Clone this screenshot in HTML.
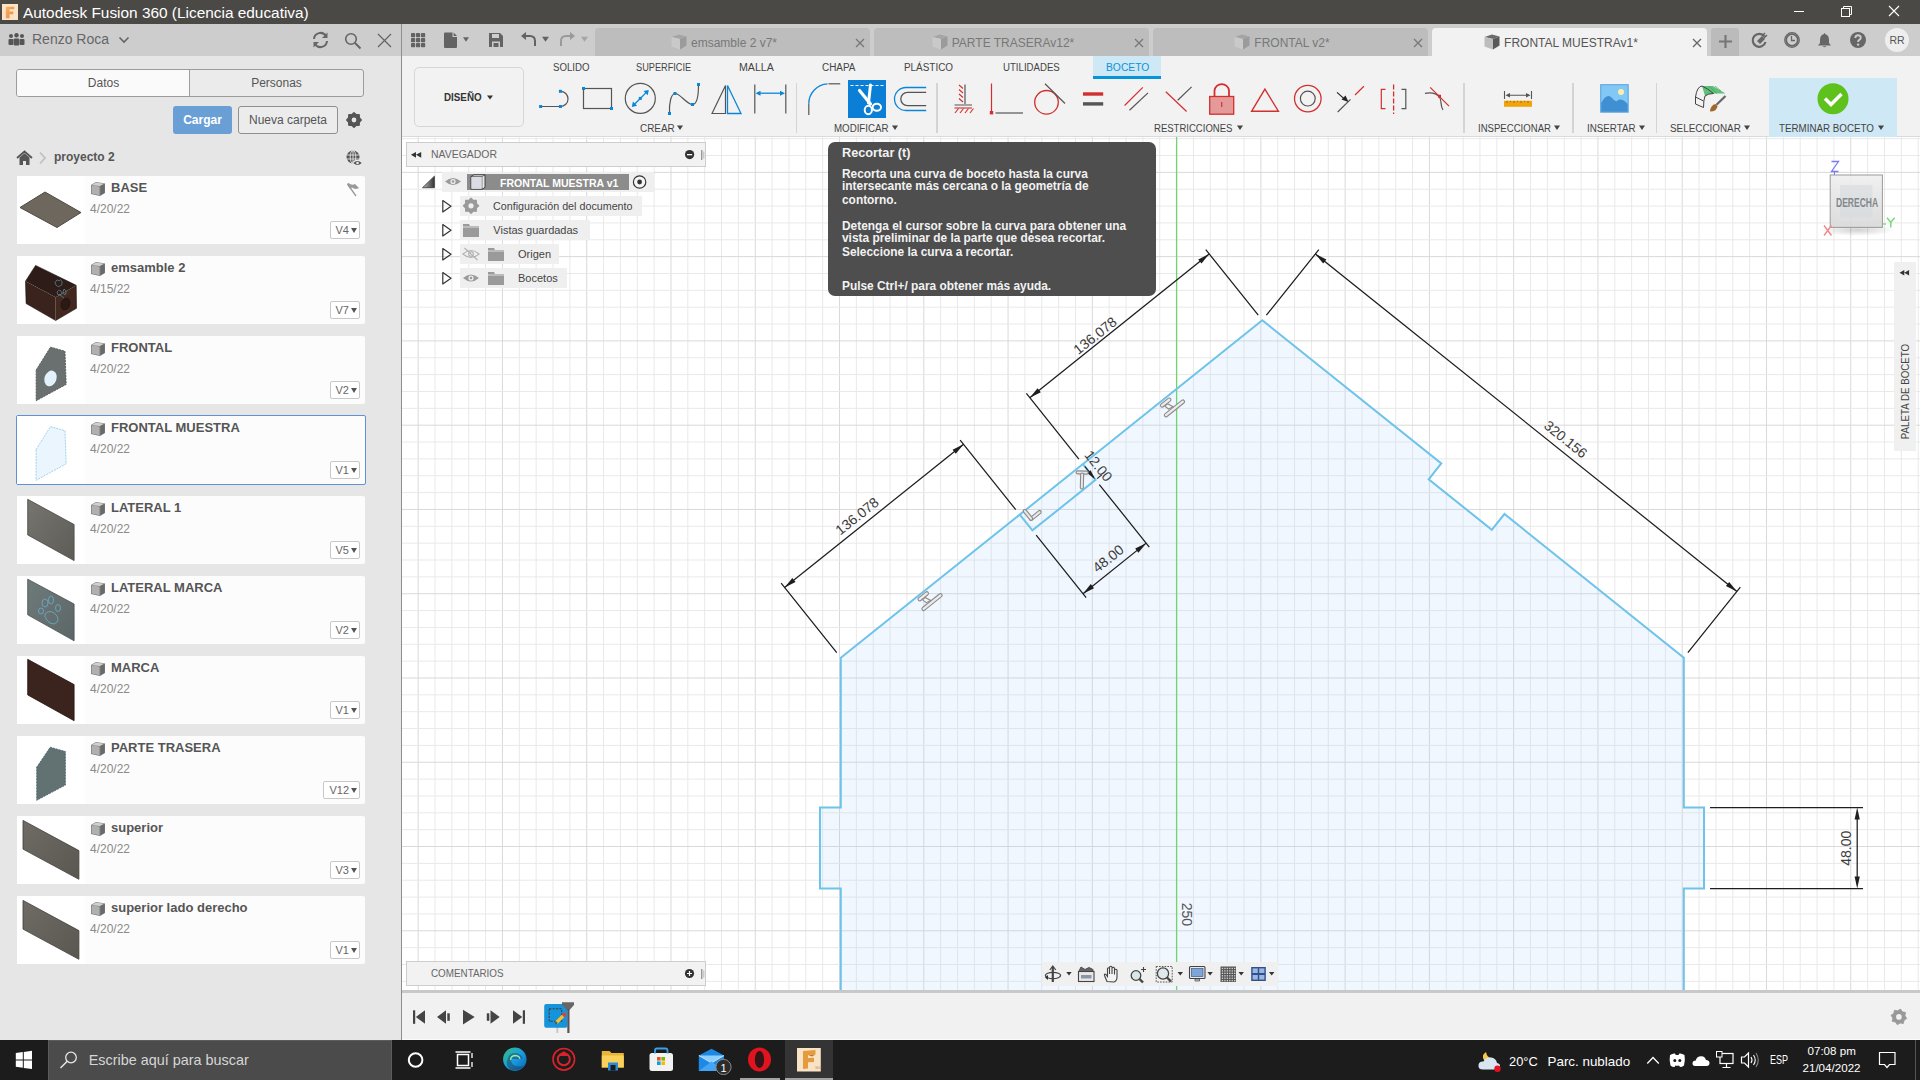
<!DOCTYPE html>
<html><head><meta charset="utf-8">
<style>
*{margin:0;padding:0;box-sizing:border-box}
html,body{width:1920px;height:1080px;overflow:hidden;background:#fff;font-family:"Liberation Sans",sans-serif}
.a{position:absolute}
svg{position:absolute;overflow:visible}
#title{left:0;top:0;width:1920px;height:24px;background:#4b4946}
#lhead{left:0;top:24px;width:401px;height:32px;background:#cdcdcd}
#lbody{left:0;top:56px;width:401px;height:984px;background:#e6e6e6}
#ldiv{left:401px;top:24px;width:1px;height:1016px;background:#8e8e8e}
#rhead{left:402px;top:24px;width:1518px;height:32px;background:#cdcdcd}
#tool{left:402px;top:56px;width:1518px;height:81px;background:#f2f2f2;border-bottom:1px solid #dadada}
#canvas{left:402px;top:137px;width:1518px;height:853px;background:#fff;overflow:hidden}
#tl{left:402px;top:990px;width:1518px;height:50px;background:#f1f1f1;border-top:3px solid #c8c8c8}
#task{left:0;top:1040px;width:1920px;height:40px;background:#1c1c1c}
.gm{stroke:#e9e9e9;stroke-width:1}
.gM{stroke:#d9d9d9;stroke-width:1}
.card{position:absolute;left:17px;width:348px;height:68px;background:#fcfcfc;border-radius:2px}
.card .th{position:absolute;left:0;top:0;width:68px;height:68px;background:#fff}
.card .t{position:absolute;left:94px;top:4px;font-weight:bold;font-size:13px;color:#555;white-space:nowrap}
.card .d{position:absolute;left:73px;top:26px;font-size:12px;color:#8a8a8a}
.card .v{position:absolute;right:5px;top:45px;min-width:29px;height:18px;border:1px solid #c8c8c8;background:#fff;border-radius:2px;font-size:11px;color:#666;padding:0 10px 0 5px;line-height:16px}
.card .v:after{content:"";position:absolute;right:2px;top:6px;border-left:3.5px solid transparent;border-right:3.5px solid transparent;border-top:5px solid #555}
.tab{position:absolute;top:28px;width:275px;height:28px;background:#bdbdbd;border-radius:4px 4px 0 0;font-size:14px;color:#777;white-space:nowrap}
.lbl{position:absolute;font-size:11px;color:#444;white-space:nowrap}
</style></head><body>
<div id="title" class="a"><svg style="left:2px;top:4px" width="16" height="16" viewBox="0 0 17 18" preserveAspectRatio="none">
<defs><linearGradient id="fg" x1="0" y1="0" x2="1" y2="1"><stop offset="0" stop-color="#f7b26a"/><stop offset="1" stop-color="#e88a3c"/></linearGradient></defs>
<rect x="0" y="0" width="17" height="18" fill="#fbe3c8"/>
<path d="M4 3 L13 3 L13 6 L8 6 L8 8.5 L12 8.5 L12 11.5 L8 11.5 L8 16 L4 16 Z" fill="url(#fg)"/>
</svg>
<div class="a" style="left:23px;top:3.5px;font-size:15.4px;color:#fff;white-space:nowrap">Autodesk Fusion 360 (Licencia educativa)</div>
<svg style="left:1790px;top:6px" width="120" height="14">
<line x1="4" y1="5.5" x2="14" y2="5.5" stroke="#fff" stroke-width="1"/>
<rect x="51.5" y="2.5" width="8" height="8" fill="none" stroke="#fff"/>
<path d="M53.5 2.5 V0.5 H61.5 V8.5 H59.5" fill="none" stroke="#fff"/>
<path d="M99 0 L109 10 M109 0 L99 10" stroke="#fff" stroke-width="1.1"/>
</svg>
</div>
<div id="lhead" class="a"><svg style="left:8px;top:9px" width="17" height="13" viewBox="0 0 17 13">
<circle cx="3" cy="3" r="2" fill="#555"/><circle cx="8.5" cy="2.2" r="2.2" fill="#555"/><circle cx="14" cy="3" r="2" fill="#555"/>
<rect x="0.5" y="6" width="5" height="6" rx="1" fill="#555"/><rect x="5.8" y="5.5" width="5.4" height="7" rx="1" fill="#555"/><rect x="11.5" y="6" width="5" height="6" rx="1" fill="#555"/>
</svg>
<div class="a" style="left:32px;top:7px;font-size:14px;color:#666;white-space:nowrap">Renzo Roca</div>
<svg style="left:118px;top:12px" width="12" height="8"><path d="M1.5 1.5 L6 6 L10.5 1.5" fill="none" stroke="#666" stroke-width="1.6"/></svg>
<svg style="left:311px;top:7px" width="19" height="18" viewBox="0 0 19 18">
<path d="M3 8 A6.5 6.5 0 0 1 15 5" fill="none" stroke="#666" stroke-width="2"/>
<path d="M16 10 A6.5 6.5 0 0 1 4 13" fill="none" stroke="#666" stroke-width="2"/>
<path d="M16.5 1.5 L16.5 7 L11 7 Z" fill="#666"/><path d="M2.5 16.5 L2.5 11 L8 11 Z" fill="#666"/>
</svg>
<svg style="left:344px;top:8px" width="18" height="18"><circle cx="7" cy="7" r="5.3" fill="none" stroke="#666" stroke-width="1.6"/><path d="M11 11 L16.5 16.5" stroke="#666" stroke-width="2"/></svg>
<svg style="left:377px;top:9px" width="16" height="16"><path d="M1 1 L14 14 M14 1 L1 14" stroke="#666" stroke-width="1.3"/></svg>
</div>
<div id="lbody" class="a"><div class="a" style="left:16px;top:13px;width:348px;height:28px;border:1px solid #9c9c9c;border-radius:3px;background:#ebebeb;overflow:hidden"><div class="a" style="left:0;top:0;width:173px;height:26px;background:#fafafa;border-right:1px solid #9c9c9c"></div><div class="a" style="left:0;top:6px;width:173px;text-align:center;font-size:12px;color:#555">Datos</div><div class="a" style="left:173px;top:6px;width:173px;text-align:center;font-size:12px;color:#555">Personas</div></div>
<div class="a" style="left:173px;top:50px;width:59px;height:28px;background:#6a9fd5;border-radius:3px;color:#fff;font-weight:bold;font-size:12px;text-align:center;line-height:28px">Cargar</div>
<div class="a" style="left:238px;top:50px;width:100px;height:28px;background:#ececec;border:1px solid #8f8f8f;border-radius:3px;color:#555;font-size:12px;text-align:center;line-height:26px">Nueva carpeta</div>
<svg style="left:345px;top:55px" width="18" height="18"><polygon points="16.20,9.00 14.19,11.15 14.09,14.09 11.15,14.19 9.00,16.20 6.85,14.19 3.91,14.09 3.81,11.15 1.80,9.00 3.81,6.85 3.91,3.91 6.85,3.81 9.00,1.80 11.15,3.81 14.09,3.91 14.19,6.85" fill="#555" stroke="#555" stroke-width="1.6" stroke-linejoin="round"/><circle cx="9" cy="9" r="2.38" fill="#e6e6e6"/></svg>
<svg style="left:16px;top:94px" width="34" height="18"><path d="M1 8 L8.5 1.5 L16 8" fill="none" stroke="#555" stroke-width="1.8"/><path d="M3.5 7.5 L8.5 3.2 L13.5 7.5 V15 H10 V11 H7 V15 H3.5 Z" fill="#555"/><path d="M24 2.5 L29 8 L24 13.5" fill="none" stroke="#c0c0c0" stroke-width="1.8"/></svg>
<div class="a" style="left:54px;top:94px;font-weight:bold;font-size:12px;color:#555">proyecto 2</div>
<svg style="left:345px;top:93px" width="19" height="19"><circle cx="8" cy="8" r="6.5" fill="#555"/><g stroke="#e6e6e6" stroke-width="0.9" fill="none"><ellipse cx="8" cy="8" rx="2.8" ry="6.5"/><line x1="1.5" y1="6" x2="14.5" y2="6"/><line x1="1.5" y1="10" x2="14.5" y2="10"/><line x1="8" y1="1.5" x2="8" y2="14.5"/></g><ellipse cx="12.5" cy="14" rx="5" ry="3.2" fill="#e6e6e6"/><path d="M8.3 14 Q12.5 10 16.7 14 Q12.5 18 8.3 14Z" fill="#555"/><circle cx="12.5" cy="14" r="1.3" fill="#e6e6e6"/></svg>
<div class="card" style="top:120px"><div class="th"><svg width="68" height="68" style="left:0;top:0"><path d="M3 31.5 L28 16 L64 36.5 L40 51.5 Z" fill="#6d675d" stroke="#4e4a43" stroke-width="1"/></svg></div><svg style="left:73px;top:5px" width="16" height="16" viewBox="0 0 16 16"><path d="M1 4 L6 1 L15 2.5 L15 12 L10 15 L1 13 Z" fill="#777"/><path d="M1.6 4.2 L6 1.6 L14 2.8 L10 5 Z" fill="#cfcfcf"/><path d="M10.6 5.2 L14.4 3.2 L14.4 11.7 L10.6 14 Z" fill="#6a6a6a"/><path d="M1.6 4.6 L9.6 5.5 L9.6 14.2 L1.6 12.6 Z" fill="#b0b0b0"/></svg><div class="t">BASE</div><div class="d">4/20/22</div><div class="v">V4</div><svg style="left:328px;top:6px" width="16" height="16"><path d="M2 2 L3.5 1 Q7 4 10 2 L14 6 Q10 8 7 5.5 L5 7 Z" fill="#9a9a9a"/><path d="M2.5 2 L11 14" stroke="#9a9a9a" stroke-width="1.3"/></svg></div>
<div class="card" style="top:200px"><div class="th"><svg width="68" height="68" style="left:0;top:0"><path d="M8.5 25.2 L18.6 9.4 L59.2 29.3 L38.7 41.2 Z" fill="#2d1c17"/><path d="M8.5 25.2 L38.7 41.2 L38.7 64.5 L9.1 47.5 Z" fill="#3a231d"/><path d="M38.7 41.2 L59.2 29.3 L59.5 52.3 L38.7 64.5 Z" fill="#432820"/><path d="M8.5 25.2 L18.6 9.4 L59.2 29.3 L59.5 52.3 L38.7 64.5 L9.1 47.5 Z" fill="none" stroke="#1a100d" stroke-width="0.6"/><ellipse cx="48.5" cy="48" rx="4.3" ry="6" transform="rotate(20 48.5 48)" fill="#2a1915" stroke="#1a100d" stroke-width="0.6"/><g fill="none" stroke="#5f8fa6" stroke-width="0.7"><path d="M38 27 q2 -5 4 -2 q2 -3 3 1 q1 3 -2 4 q-3 2 -5 -3z"/><path d="M40 36 q3 -4 5 1 q-1 3 -4 2z"/><path d="M47 33 q3 1 2 5 q-2 2 -3 -2z"/><path d="M42 38 L47 42"/></g></svg></div><svg style="left:73px;top:5px" width="16" height="16" viewBox="0 0 16 16"><path d="M1 4 L6 1 L15 2.5 L15 12 L10 15 L1 13 Z" fill="#777"/><path d="M1.6 4.2 L6 1.6 L14 2.8 L10 5 Z" fill="#cfcfcf"/><path d="M10.6 5.2 L14.4 3.2 L14.4 11.7 L10.6 14 Z" fill="#6a6a6a"/><path d="M1.6 4.6 L9.6 5.5 L9.6 14.2 L1.6 12.6 Z" fill="#b0b0b0"/></svg><div class="t">emsamble 2</div><div class="d">4/15/22</div><div class="v">V7</div></div>
<div class="card" style="top:280px"><div class="th"><svg width="68" height="68" style="left:0;top:0"><path d="M19.1 34 L33.5 11.1 L48 15.2 L49.2 48.4 L19.1 64.8 Z" fill="#6a7070" stroke="#4d5252" stroke-width="0.8" stroke-dasharray="2 1"/><ellipse cx="33.5" cy="42.4" rx="6" ry="8" transform="rotate(20 33.5 42.4)" fill="#e2f1fb"/></svg></div><svg style="left:73px;top:5px" width="16" height="16" viewBox="0 0 16 16"><path d="M1 4 L6 1 L15 2.5 L15 12 L10 15 L1 13 Z" fill="#777"/><path d="M1.6 4.2 L6 1.6 L14 2.8 L10 5 Z" fill="#cfcfcf"/><path d="M10.6 5.2 L14.4 3.2 L14.4 11.7 L10.6 14 Z" fill="#6a6a6a"/><path d="M1.6 4.6 L9.6 5.5 L9.6 14.2 L1.6 12.6 Z" fill="#b0b0b0"/></svg><div class="t">FRONTAL</div><div class="d">4/20/22</div><div class="v">V2</div></div>
<div class="card" style="top:359px;left:16px;width:350px;height:70px;border:1px solid #5f92d3;"><div class="a" style="left:0;top:0;width:348px;height:68px"><div class="th"><svg width="68" height="68" style="left:0;top:0"><path d="M19.1 33.4 L33.5 10.6 L48 14.7 L49.2 47.8 L19.1 64.3 Z" fill="#eaf5fd" stroke="#8cc7e6" stroke-width="0.8" stroke-dasharray="2 1"/></svg></div><svg style="left:73px;top:5px" width="16" height="16" viewBox="0 0 16 16"><path d="M1 4 L6 1 L15 2.5 L15 12 L10 15 L1 13 Z" fill="#777"/><path d="M1.6 4.2 L6 1.6 L14 2.8 L10 5 Z" fill="#cfcfcf"/><path d="M10.6 5.2 L14.4 3.2 L14.4 11.7 L10.6 14 Z" fill="#6a6a6a"/><path d="M1.6 4.6 L9.6 5.5 L9.6 14.2 L1.6 12.6 Z" fill="#b0b0b0"/></svg><div class="t">FRONTAL MUESTRA</div><div class="d">4/20/22</div><div class="v">V1</div></div></div>
<div class="card" style="top:440px"><div class="th"><svg width="68" height="68" style="left:0;top:0"><defs><linearGradient id="l1" x1="0" y1="0" x2="1" y2="1"><stop offset="0" stop-color="#77756f"/><stop offset="1" stop-color="#5e5c57"/></linearGradient></defs><path d="M10.7 3.3 L57.1 28.5 L57.1 64.6 L10.7 38.9 Z" fill="url(#l1)" stroke="#4a4844" stroke-width="0.8"/></svg></div><svg style="left:73px;top:5px" width="16" height="16" viewBox="0 0 16 16"><path d="M1 4 L6 1 L15 2.5 L15 12 L10 15 L1 13 Z" fill="#777"/><path d="M1.6 4.2 L6 1.6 L14 2.8 L10 5 Z" fill="#cfcfcf"/><path d="M10.6 5.2 L14.4 3.2 L14.4 11.7 L10.6 14 Z" fill="#6a6a6a"/><path d="M1.6 4.6 L9.6 5.5 L9.6 14.2 L1.6 12.6 Z" fill="#b0b0b0"/></svg><div class="t">LATERAL 1</div><div class="d">4/20/22</div><div class="v">V5</div></div>
<div class="card" style="top:520px"><div class="th"><svg width="68" height="68" style="left:0;top:0"><defs><linearGradient id="l2" x1="0" y1="0" x2="1" y2="1"><stop offset="0" stop-color="#6f7a7b"/><stop offset="1" stop-color="#5c6667"/></linearGradient></defs><path d="M10.7 3.2 L57.1 28 L57.1 64.8 L10.7 38.8 Z" fill="url(#l2)" stroke="#4a5152" stroke-width="0.8"/><g fill="none" stroke="#6ab7d8" stroke-width="0.7"><ellipse cx="28" cy="27" rx="3" ry="4"/><ellipse cx="34" cy="24" rx="2.5" ry="4"/><ellipse cx="41" cy="32" rx="2.5" ry="3.5"/><ellipse cx="24" cy="35" rx="2.5" ry="3"/><path d="M28 38 q6 -6 12 2 q3 6 -3 8 q-5 0 -7 -4 q-3 -3 -2 -6z"/></g></svg></div><svg style="left:73px;top:5px" width="16" height="16" viewBox="0 0 16 16"><path d="M1 4 L6 1 L15 2.5 L15 12 L10 15 L1 13 Z" fill="#777"/><path d="M1.6 4.2 L6 1.6 L14 2.8 L10 5 Z" fill="#cfcfcf"/><path d="M10.6 5.2 L14.4 3.2 L14.4 11.7 L10.6 14 Z" fill="#6a6a6a"/><path d="M1.6 4.6 L9.6 5.5 L9.6 14.2 L1.6 12.6 Z" fill="#b0b0b0"/></svg><div class="t">LATERAL MARCA</div><div class="d">4/20/22</div><div class="v">V2</div></div>
<div class="card" style="top:600px"><div class="th"><svg width="68" height="68" style="left:0;top:0"><path d="M10.7 3.3 L57.1 28.6 L57.1 64.7 L10.7 38.9 Z" fill="#3b231e" stroke="#2a1714" stroke-width="0.8"/></svg></div><svg style="left:73px;top:5px" width="16" height="16" viewBox="0 0 16 16"><path d="M1 4 L6 1 L15 2.5 L15 12 L10 15 L1 13 Z" fill="#777"/><path d="M1.6 4.2 L6 1.6 L14 2.8 L10 5 Z" fill="#cfcfcf"/><path d="M10.6 5.2 L14.4 3.2 L14.4 11.7 L10.6 14 Z" fill="#6a6a6a"/><path d="M1.6 4.6 L9.6 5.5 L9.6 14.2 L1.6 12.6 Z" fill="#b0b0b0"/></svg><div class="t">MARCA</div><div class="d">4/20/22</div><div class="v">V1</div></div>
<div class="card" style="top:680px"><div class="th"><svg width="68" height="68" style="left:0;top:0"><path d="M19.7 31.3 L33.2 11.2 L48.4 15.5 L48.4 49.1 L19.7 64.3 Z" fill="#627272" stroke="#3f5a66" stroke-width="0.8" stroke-dasharray="2 1"/></svg></div><svg style="left:73px;top:5px" width="16" height="16" viewBox="0 0 16 16"><path d="M1 4 L6 1 L15 2.5 L15 12 L10 15 L1 13 Z" fill="#777"/><path d="M1.6 4.2 L6 1.6 L14 2.8 L10 5 Z" fill="#cfcfcf"/><path d="M10.6 5.2 L14.4 3.2 L14.4 11.7 L10.6 14 Z" fill="#6a6a6a"/><path d="M1.6 4.6 L9.6 5.5 L9.6 14.2 L1.6 12.6 Z" fill="#b0b0b0"/></svg><div class="t">PARTE TRASERA</div><div class="d">4/20/22</div><div class="v">V12</div></div>
<div class="card" style="top:760px"><div class="th"><svg width="68" height="68" style="left:0;top:0"><defs><linearGradient id="l3" x1="0" y1="0" x2="1" y2="1"><stop offset="0" stop-color="#6f6c65"/><stop offset="1" stop-color="#5a5751"/></linearGradient></defs><path d="M6 4.4 L61.9 34.6 L61.9 63.3 L6 33.1 Z" fill="url(#l3)" stroke="#3e3c38" stroke-width="0.8"/></svg></div><svg style="left:73px;top:5px" width="16" height="16" viewBox="0 0 16 16"><path d="M1 4 L6 1 L15 2.5 L15 12 L10 15 L1 13 Z" fill="#777"/><path d="M1.6 4.2 L6 1.6 L14 2.8 L10 5 Z" fill="#cfcfcf"/><path d="M10.6 5.2 L14.4 3.2 L14.4 11.7 L10.6 14 Z" fill="#6a6a6a"/><path d="M1.6 4.6 L9.6 5.5 L9.6 14.2 L1.6 12.6 Z" fill="#b0b0b0"/></svg><div class="t">superior</div><div class="d">4/20/22</div><div class="v">V3</div></div>
<div class="card" style="top:840px"><div class="th"><svg width="68" height="68" style="left:0;top:0"><path d="M6 4.4 L61.9 34.6 L61.9 63.3 L6 33.1 Z" fill="url(#l3)" stroke="#3e3c38" stroke-width="0.8"/></svg></div><svg style="left:73px;top:5px" width="16" height="16" viewBox="0 0 16 16"><path d="M1 4 L6 1 L15 2.5 L15 12 L10 15 L1 13 Z" fill="#777"/><path d="M1.6 4.2 L6 1.6 L14 2.8 L10 5 Z" fill="#cfcfcf"/><path d="M10.6 5.2 L14.4 3.2 L14.4 11.7 L10.6 14 Z" fill="#6a6a6a"/><path d="M1.6 4.6 L9.6 5.5 L9.6 14.2 L1.6 12.6 Z" fill="#b0b0b0"/></svg><div class="t">superior lado derecho</div><div class="d">4/20/22</div><div class="v">V1</div></div></div>
<div id="ldiv" class="a"></div>
<div id="rhead" class="a"><svg style="left:9px;top:9px" width="15" height="15" ><rect x="0" y="0" width="4.2" height="4.2" rx="0.8" fill="#636363"/><rect x="5" y="0" width="4.2" height="4.2" rx="0.8" fill="#636363"/><rect x="10" y="0" width="4.2" height="4.2" rx="0.8" fill="#636363"/><rect x="0" y="5" width="4.2" height="4.2" rx="0.8" fill="#636363"/><rect x="5" y="5" width="4.2" height="4.2" rx="0.8" fill="#636363"/><rect x="10" y="5" width="4.2" height="4.2" rx="0.8" fill="#636363"/><rect x="0" y="10" width="4.2" height="4.2" rx="0.8" fill="#636363"/><rect x="5" y="10" width="4.2" height="4.2" rx="0.8" fill="#636363"/><rect x="10" y="10" width="4.2" height="4.2" rx="0.8" fill="#636363"/></svg>
<svg style="left:42px;top:8px" width="30" height="17" ><path d="M1 0.5 H8.5 V5 H13 V15 Q13 16 12 16 H1 Q0 16 0 15 V1.5 Q0 0.5 1 0.5Z" fill="#636363"/><path d="M9.6 0.5 L13 3.9 H9.6Z" fill="#636363"/><path d="M19 5.3 H25 L22 9.8Z" fill="#636363"/></svg>
<svg style="left:86px;top:8px" width="16" height="16" ><path d="M1 1 H12 L15 4 V15 H1 Z" fill="#636363"/><rect x="4" y="2" width="7" height="4" fill="#cdcdcd"/><rect x="4" y="9.5" width="8" height="5.5" fill="#cdcdcd"/><rect x="5.5" y="11" width="5" height="4" fill="#636363"/></svg>
<svg style="left:118px;top:9px" width="32" height="14" ><path d="M5 3 H10 Q15 3 15 8 V13" fill="none" stroke="#636363" stroke-width="2"/><path d="M1 3 L6 -1 V7Z" fill="#636363"/><path d="M22 3.8 H29 L25.5 8.8Z" fill="#636363"/></svg>
<svg style="left:158px;top:9px" width="32" height="14" ><path d="M11 3 H6 Q1 3 1 8 V13" fill="none" stroke="#9a9a9a" stroke-width="2"/><path d="M15 3 L10 -1 V7Z" fill="#9a9a9a"/><path d="M21 3.8 H28 L24.5 8.8Z" fill="#a5a5a5"/></svg>
<div class="tab" style="left:193px;top:4px;background:#bdbdbd;color:#787878"><div class="a" style="left:0;top:6px;width:258px;text-align:center;font-size:12px"><svg style="position:relative;display:inline-block;vertical-align:-3px;margin-right:4px" width="16" height="16" viewBox="0 0 16 16"><path d="M0.5 3 L8 0.5 L15.5 2.5 L9 5 Z" fill="#a5a5a5"/><path d="M0.5 3 L9 5 L9 15.5 L0.5 12.5 Z" fill="#c9c9c9"/><path d="M9 5 L15.5 2.5 L15.5 11.5 L9 15.5Z" fill="#9b9b9b"/></svg>emsamble 2 v7*</div><svg style="left:260px;top:10px" width="10" height="10"><path d="M1 1 L9 9 M9 1 L1 9" stroke="#777" stroke-width="1.3"/></svg></div>
<div class="tab" style="left:472px;top:4px;background:#bdbdbd;color:#787878"><div class="a" style="left:0;top:6px;width:258px;text-align:center;font-size:12px"><svg style="position:relative;display:inline-block;vertical-align:-3px;margin-right:4px" width="16" height="16" viewBox="0 0 16 16"><path d="M0.5 3 L8 0.5 L15.5 2.5 L9 5 Z" fill="#a5a5a5"/><path d="M0.5 3 L9 5 L9 15.5 L0.5 12.5 Z" fill="#c9c9c9"/><path d="M9 5 L15.5 2.5 L15.5 11.5 L9 15.5Z" fill="#9b9b9b"/></svg>PARTE TRASERAv12*</div><svg style="left:260px;top:10px" width="10" height="10"><path d="M1 1 L9 9 M9 1 L1 9" stroke="#777" stroke-width="1.3"/></svg></div>
<div class="tab" style="left:751px;top:4px;background:#bdbdbd;color:#787878"><div class="a" style="left:0;top:6px;width:258px;text-align:center;font-size:12px"><svg style="position:relative;display:inline-block;vertical-align:-3px;margin-right:4px" width="16" height="16" viewBox="0 0 16 16"><path d="M0.5 3 L8 0.5 L15.5 2.5 L9 5 Z" fill="#a5a5a5"/><path d="M0.5 3 L9 5 L9 15.5 L0.5 12.5 Z" fill="#c9c9c9"/><path d="M9 5 L15.5 2.5 L15.5 11.5 L9 15.5Z" fill="#9b9b9b"/></svg>FRONTAL v2*</div><svg style="left:260px;top:10px" width="10" height="10"><path d="M1 1 L9 9 M9 1 L1 9" stroke="#777" stroke-width="1.3"/></svg></div>
<div class="tab" style="left:1030px;top:4px;background:#f2f2f2;color:#555"><div class="a" style="left:0;top:6px;width:258px;text-align:center;font-size:12px"><svg style="position:relative;display:inline-block;vertical-align:-3px;margin-right:4px" width="16" height="16" viewBox="0 0 16 16"><path d="M0.5 3 L8 0.5 L15.5 2.5 L9 5 Z" fill="#6a6a6a"/><path d="M0.5 3 L9 5 L9 15.5 L0.5 12.5 Z" fill="#bdbdbd"/><path d="M9 5 L15.5 2.5 L15.5 11.5 L9 15.5Z" fill="#595959"/></svg>FRONTAL MUESTRAv1*</div><svg style="left:260px;top:10px" width="10" height="10"><path d="M1 1 L9 9 M9 1 L1 9" stroke="#666" stroke-width="1.3"/></svg></div>
<div class="a" style="left:1309px;top:4px;width:28px;height:28px;background:#bbbbbb;border-radius:3px 3px 0 0"></div>
<svg style="left:1317px;top:11px" width="13" height="13" ><path d="M6.5 0 V13 M0 6.5 H13" stroke="#777" stroke-width="2.2"/></svg>
<svg style="left:1349px;top:8px" width="17" height="17" ><path d="M13.5 4.5 A6.5 6.5 0 1 0 14.5 10" fill="none" stroke="#666" stroke-width="2.2"/><path d="M6 9 L11 4 L14 7 L9 12Z" fill="#666"/><path d="M11 4 L14 1 M13 6 L16 3" stroke="#666" stroke-width="1.5"/></svg>
<svg style="left:1382px;top:8px" width="17" height="17" ><circle cx="8" cy="8" r="7.3" fill="none" stroke="#666" stroke-width="1.2"/><circle cx="8" cy="8" r="5.8" fill="none" stroke="#666" stroke-width="1.8"/><path d="M7.5 4 V8.5 H11" fill="none" stroke="#666" stroke-width="1.3"/></svg>
<svg style="left:1415px;top:8px" width="16" height="17" ><path d="M7.5 1 Q8 1 8 2 Q12 3 12 8 V11 L14 13.5 H1 L3 11 V8 Q3 3 7 2 Q7 1 7.5 1Z" fill="#666"/><path d="M5.5 14.2 H9.5 Q7.5 16.5 5.5 14.2Z" fill="#666"/></svg>
<svg style="left:1448px;top:8px" width="17" height="17" ><circle cx="8" cy="8" r="8" fill="#666"/><path d="M5.3 6 Q5.3 3.2 8 3.2 Q10.8 3.2 10.8 5.8 Q10.8 7.3 9 8.2 Q8.1 8.7 8.1 10" fill="none" stroke="#cdcdcd" stroke-width="1.9"/><circle cx="8.1" cy="12.6" r="1.2" fill="#cdcdcd"/></svg>
<div class="a" style="left:1483px;top:4px;width:24px;height:24px;border-radius:12px;background:#eeeeee;color:#555;font-size:10.5px;text-align:center;line-height:24px">RR</div></div>
<div id="tool" class="a"><div class="a" style="left:12px;top:11px;width:110px;height:60px;border:1px solid #d6d6d6;border-radius:5px"></div>
<div class="a" style="left:42px;top:33.599999999999994px;font-size:11.7px;line-height:13px;font-weight:bold;color:#333;white-space:nowrap;transform:scaleX(0.84);transform-origin:0 0">DISEÑO</div>
<svg style="left:84.00px;top:38.00px" width="8" height="6" viewBox="486 94 8 6"><path d="M487 95.5 H493 L490 99.5Z" fill="#333"/></svg>
<div class="a" style="left:691px;top:0;width:68px;height:23.4px;background:#cfe8f6;border-bottom:3px solid #0696d7"></div>
<div class="a" style="left:150.50px;top:3.94px;font-size:11.7px;line-height:13px;color:#444;white-space:nowrap;transform:scaleX(0.826);transform-origin:0 0">SOLIDO</div>
<div class="a" style="left:233.60px;top:3.94px;font-size:11.7px;line-height:13px;color:#444;white-space:nowrap;transform:scaleX(0.786);transform-origin:0 0">SUPERFICIE</div>
<div class="a" style="left:336.50px;top:3.94px;font-size:11.7px;line-height:13px;color:#444;white-space:nowrap;transform:scaleX(0.908);transform-origin:0 0">MALLA</div>
<div class="a" style="left:419.60px;top:3.94px;font-size:11.7px;line-height:13px;color:#444;white-space:nowrap;transform:scaleX(0.848);transform-origin:0 0">CHAPA</div>
<div class="a" style="left:502.00px;top:3.94px;font-size:11.7px;line-height:13px;color:#444;white-space:nowrap;transform:scaleX(0.848);transform-origin:0 0">PLÁSTICO</div>
<div class="a" style="left:600.80px;top:3.94px;font-size:11.7px;line-height:13px;color:#444;white-space:nowrap;transform:scaleX(0.825);transform-origin:0 0">UTILIDADES</div>
<div class="a" style="left:703.70px;top:3.94px;font-size:11.7px;line-height:13px;color:#0696d7;white-space:nowrap;transform:scaleX(0.881);transform-origin:0 0">BOCETO</div>
<div class="a" style="left:237.60px;top:65.24px;font-size:11.7px;line-height:13px;color:#444;white-space:nowrap;transform:scaleX(0.848);transform-origin:0 0">CREAR</div><svg style="left:275.00px;top:69.30px" width="8" height="6" viewBox="677 125.3 8 6"><path d="M677 125.8 H683 L680 130.3Z" fill="#444"/></svg>
<div class="a" style="left:431.50px;top:65.24px;font-size:11.7px;line-height:13px;color:#444;white-space:nowrap;transform:scaleX(0.831);transform-origin:0 0">MODIFICAR</div><svg style="left:490.00px;top:69.30px" width="8" height="6" viewBox="892 125.3 8 6"><path d="M892 125.8 H898 L895 130.3Z" fill="#444"/></svg>
<div class="a" style="left:752.40px;top:65.24px;font-size:11.7px;line-height:13px;color:#444;white-space:nowrap;transform:scaleX(0.816);transform-origin:0 0">RESTRICCIONES</div><svg style="left:835.00px;top:69.30px" width="8" height="6" viewBox="1237 125.3 8 6"><path d="M1237 125.8 H1243 L1240 130.3Z" fill="#444"/></svg>
<div class="a" style="left:1075.70px;top:65.24px;font-size:11.7px;line-height:13px;color:#444;white-space:nowrap;transform:scaleX(0.820);transform-origin:0 0">INSPECCIONAR</div><svg style="left:1152.00px;top:69.30px" width="8" height="6" viewBox="1554 125.3 8 6"><path d="M1554 125.8 H1560 L1557 130.3Z" fill="#444"/></svg>
<div class="a" style="left:1185.00px;top:65.24px;font-size:11.7px;line-height:13px;color:#444;white-space:nowrap;transform:scaleX(0.838);transform-origin:0 0">INSERTAR</div><svg style="left:1236.60px;top:69.30px" width="8" height="6" viewBox="1638.6 125.3 8 6"><path d="M1638.6 125.8 H1644.6 L1641.6 130.3Z" fill="#444"/></svg>
<div class="a" style="left:1268.00px;top:65.24px;font-size:11.7px;line-height:13px;color:#444;white-space:nowrap;transform:scaleX(0.845);transform-origin:0 0">SELECCIONAR</div><svg style="left:1341.50px;top:69.30px" width="8" height="6" viewBox="1743.5 125.3 8 6"><path d="M1743.5 125.8 H1749.5 L1746.5 130.3Z" fill="#444"/></svg>
<div class="a" style="left:1377.00px;top:65.24px;font-size:11.7px;line-height:13px;color:#444;white-space:nowrap;transform:scaleX(0.837);transform-origin:0 0">TERMINAR BOCETO</div><svg style="left:1475.50px;top:69.30px" width="8" height="6" viewBox="1877.5 125.3 8 6"><path d="M1877.5 125.8 H1883.5 L1880.5 130.3Z" fill="#444"/></svg>
<div class="a" style="left:393.5px;top:27px;width:1.5px;height:50px;background:#d4d4d4"></div>
<div class="a" style="left:534.0px;top:27px;width:1.5px;height:50px;background:#d4d4d4"></div>
<div class="a" style="left:1061.0px;top:27px;width:1.5px;height:50px;background:#d4d4d4"></div>
<div class="a" style="left:1170.0px;top:27px;width:1.5px;height:50px;background:#d4d4d4"></div>
<div class="a" style="left:1253.5px;top:27px;width:1.5px;height:50px;background:#d4d4d4"></div>
<div class="a" style="left:1367px;top:22px;width:128px;height:59px;background:#cfe8f6"></div>
<div class="a" style="left:1377.00px;top:65.24px;font-size:11.7px;line-height:13px;color:#444;white-space:nowrap;transform:scaleX(0.837);transform-origin:0 0">TERMINAR BOCETO</div><svg style="left:1475.50px;top:69.30px" width="8" height="6" viewBox="1877.5 125.3 8 6"><path d="M1877.5 125.8 H1883.5 L1880.5 130.3Z" fill="#444"/></svg>
<svg style="left:0;top:0" width="1518" height="81" viewBox="402 56 1518 81"><path d="M540.6 106.5 H560.4 M560.4 91.3 A7.6 7.6 0 0 1 560.4 106.5" fill="none" stroke="#555" stroke-width="1.2"/><rect x="539.1" y="105.0" width="3" height="3" fill="#0a86d9"/><rect x="558.9" y="105.0" width="3" height="3" fill="#0a86d9"/><rect x="558.9" y="89.8" width="3" height="3" fill="#0a86d9"/><rect x="583.5" y="88.5" width="28" height="20" fill="none" stroke="#555" stroke-width="1.2"/><rect x="582.0" y="87.0" width="3" height="3" fill="#0a86d9"/><rect x="610.0" y="107.0" width="3" height="3" fill="#0a86d9"/><circle cx="640.3" cy="98.4" r="15" fill="none" stroke="#555" stroke-width="1.2"/><path d="M633 105.7 L647.6 91.1" stroke="#0a86d9" stroke-width="1.3"/><path d="M648.8 89.9 L643.5 91 L647.7 95.2Z M631.8 106.9 L637.1 105.8 L632.9 101.6Z" fill="#0a86d9"/><rect x="638.8" y="96.9" width="3" height="3" fill="#0a86d9"/><path d="M669.5 113.5 C669 103 671 94 675 93.5 C680 93 686 104 692.5 104.5 C697 104.5 698.5 95 698.5 84.5" fill="none" stroke="#555" stroke-width="1.2"/><rect x="668.0" y="112.0" width="3" height="3" fill="#0a86d9"/><rect x="673.5" y="92.0" width="3" height="3" fill="#0a86d9"/><rect x="691.0" y="103.0" width="3" height="3" fill="#0a86d9"/><rect x="697.0" y="83.0" width="3" height="3" fill="#0a86d9"/><path d="M712 113.5 L725.5 85.5 V113.5Z" fill="none" stroke="#555" stroke-width="1.2"/><path d="M727.5 85.5 L741 113.5 H727.5Z" fill="none" stroke="#0a86d9" stroke-width="1.3"/><path d="M754.8 84.5 V113.5 M785.8 84.5 V113.5" stroke="#555" stroke-width="1.2"/><path d="M758 93.2 H782.5" stroke="#0a86d9" stroke-width="1.3"/><path d="M755.5 93.2 L760.5 90.7 V95.7Z M785 93.2 L780 90.7 V95.7Z" fill="#0a86d9"/><path d="M808.8 103.5 V115" stroke="#555" stroke-width="1.2"/><path d="M808.8 103.5 A20 20 0 0 1 827.5 83.8" fill="none" stroke="#0a86d9" stroke-width="1.3"/><path d="M828.5 83.8 H840.2" stroke="#555" stroke-width="1.2"/><rect x="848" y="80" width="38" height="38" fill="#0a7fd5"/><path d="M850.5 85.5 H884" stroke="#fff" stroke-width="1" stroke-dasharray="3 2"/><path d="M859.5 90.5 L870.5 104" stroke="#fff" stroke-width="3.2" stroke-linecap="round"/><path d="M870.5 85 L868.5 103" stroke="#fff" stroke-width="3" stroke-linecap="round"/><ellipse cx="868.3" cy="110" rx="3.6" ry="4.2" fill="none" stroke="#fff" stroke-width="2"/><ellipse cx="876.8" cy="107.3" rx="4.2" ry="3.5" fill="none" stroke="#fff" stroke-width="2"/><path d="M926.2 87.5 H906 A11.5 11.5 0 0 0 906 110.5 H926.2" fill="none" stroke="#0a86d9" stroke-width="1.3"/><path d="M926.2 92.3 H907.5 A6.7 6.7 0 0 0 907.5 105.7 H926.2" fill="none" stroke="#555" stroke-width="1.3"/><path d="M965 84.5 V104 M954.5 105 H972" stroke="#555" stroke-width="1.2"/><path d="M959 85 L963 88.5 M959 89.5 L963 93 M959 94 L963 97.5 M959 98.5 L963 102" stroke="#d32f2f" stroke-width="1.1"/><path d="M955 113 L958.5 108.5 M960 113 L963.5 108.5 M965 113 L968.5 108.5 M970 113 L973.5 108.5" stroke="#d32f2f" stroke-width="1.1"/><path d="M954.5 108 H972" stroke="#d32f2f" stroke-width="1.1"/><path d="M991.5 83.5 V112" stroke="#d32f2f" stroke-width="1.2"/><rect x="989.8" y="111" width="3.4" height="3.4" fill="#d32f2f"/><path d="M995.5 113 H1023" stroke="#555" stroke-width="1.2"/><circle cx="1046.5" cy="102.3" r="11.8" fill="none" stroke="#d32f2f" stroke-width="1.3"/><path d="M1045 83.8 L1065 103.5" stroke="#555" stroke-width="1.2"/><rect x="1083" y="92.3" width="20.2" height="3.4" fill="#d32f2f"/><rect x="1083" y="102.2" width="20.2" height="3.4" fill="#555"/><path d="M1124.6 105.5 L1142.8 87.3" stroke="#d32f2f" stroke-width="1.2"/><path d="M1129.5 110.3 L1148 92.9" stroke="#555" stroke-width="1.2"/><path d="M1165.8 91.7 L1186.6 111.5" stroke="#d32f2f" stroke-width="1.2"/><path d="M1177.7 100.2 L1191.6 86.9" stroke="#555" stroke-width="1.2"/><path d="M1214.5 96.5 V90.5 A7.3 7.3 0 0 1 1229 90.5 V96.5" fill="none" stroke="#d32f2f" stroke-width="1.8"/><rect x="1209.7" y="96.5" width="24" height="17.7" fill="#e59a9a" stroke="#d32f2f" stroke-width="1.3"/><path d="M1221.7 102 V107" stroke="#d32f2f" stroke-width="1.2"/><path d="M1251.7 111.2 L1264.9 89.2 L1278.4 111.2Z" fill="none" stroke="#d32f2f" stroke-width="1.4"/><circle cx="1307.8" cy="98.6" r="13.3" fill="none" stroke="#d32f2f" stroke-width="1.3"/><circle cx="1307.8" cy="98.6" r="7.4" fill="none" stroke="#555" stroke-width="1.2"/><path d="M1337.7 112 L1350.5 99.4" stroke="#555" stroke-width="1.2"/><path d="M1355 95 L1363.9 86.3" stroke="#d32f2f" stroke-width="1.2"/><path d="M1337 92.3 L1344 98.7" stroke="#222" stroke-width="1.1"/><path d="M1348.5 102 L1341.5 99.5 L1345.5 95.5Z" fill="#222"/><path d="M1385.5 89.3 H1381.3 V108.7 H1385.5" fill="none" stroke="#d32f2f" stroke-width="1.2"/><path d="M1393.6 84.5 V114" stroke="#d32f2f" stroke-width="1.3" stroke-dasharray="5 2"/><path d="M1401.5 89.3 H1405.8 V108.7 H1401.5" fill="none" stroke="#555" stroke-width="1.2"/><path d="M1425 93.3 C1432 92 1437 94 1439.5 97 C1442 101 1440 106 1443 110" fill="none" stroke="#555" stroke-width="1.2"/><path d="M1430.2 87.3 L1449 106.1" stroke="#d32f2f" stroke-width="1.2"/><rect x="1438" y="94.7" width="3" height="3" fill="#d32f2f"/><path d="M1504.5 91 V99 M1531.5 91 V99 M1507 95.2 H1529" stroke="#555" stroke-width="1.1"/><path d="M1505.5 95.2 L1510 93 V97.4Z M1530.5 95.2 L1526 93 V97.4Z" fill="#555"/><rect x="1504" y="100.8" width="28" height="6" fill="#f0a30a"/><path d="M1507 100.8 V103 M1510.5 100.8 V102 M1514 100.8 V103 M1517.5 100.8 V102 M1521 100.8 V103 M1524.5 100.8 V102 M1528 100.8 V103" stroke="#8a5a00" stroke-width="0.7"/><rect x="1600.2" y="84.2" width="28.5" height="28.5" fill="#4f9fe0"/><rect x="1601.2" y="85.2" width="26.5" height="26.5" fill="#82c8f4"/><path d="M1601.2 103 Q1607 92 1612 98 Q1615 102 1617 101 Q1621 97 1627.7 104 V111.7 H1601.2Z" fill="#3f8fd2"/><circle cx="1621" cy="91.9" r="3" fill="#ffeea8"/><path d="M1702 86 H1713 L1725.5 93.5 H1713.5 Q1708 93.5 1705 96Z" fill="#5fc07a"/><path d="M1709 86 L1717 93.5 M1715 86 L1721 91" stroke="#3d9a56" stroke-width="0.6"/><path d="M1695.5 97 Q1697 86.5 1702 86 Q1707 88 1713.5 93.5 Q1708 93.5 1705 96 Q1703.5 100 1703.5 107.5 L1695.5 104Z M1695.5 97 L1703.5 101" fill="none" stroke="#444" stroke-width="1"/><path d="M1710 111.5 Q1710.5 105 1715.5 104 L1717.5 106 Q1717 111.5 1710 111.5Z" fill="#a0682c"/><path d="M1716.5 104.8 L1725.5 96" stroke="#666" stroke-width="2.2"/><circle cx="1833" cy="98.75" r="15.5" fill="#5ec11c"/><path d="M1825 98.5 L1831 104.5 L1841.5 94" fill="none" stroke="#fff" stroke-width="3.5"/></svg></div>
<div id="canvas" class="a">
<svg width="1518" height="853" style="left:0;top:0"><line x1="16.17" y1="0" x2="16.17" y2="853" class="gM"/>
<line x1="33.02" y1="0" x2="33.02" y2="853" class="gm"/>
<line x1="49.88" y1="0" x2="49.88" y2="853" class="gm"/>
<line x1="66.73" y1="0" x2="66.73" y2="853" class="gm"/>
<line x1="83.59" y1="0" x2="83.59" y2="853" class="gm"/>
<line x1="100.44" y1="0" x2="100.44" y2="853" class="gM"/>
<line x1="117.29" y1="0" x2="117.29" y2="853" class="gm"/>
<line x1="134.15" y1="0" x2="134.15" y2="853" class="gm"/>
<line x1="151.00" y1="0" x2="151.00" y2="853" class="gm"/>
<line x1="167.86" y1="0" x2="167.86" y2="853" class="gm"/>
<line x1="184.71" y1="0" x2="184.71" y2="853" class="gM"/>
<line x1="201.56" y1="0" x2="201.56" y2="853" class="gm"/>
<line x1="218.42" y1="0" x2="218.42" y2="853" class="gm"/>
<line x1="235.27" y1="0" x2="235.27" y2="853" class="gm"/>
<line x1="252.13" y1="0" x2="252.13" y2="853" class="gm"/>
<line x1="268.98" y1="0" x2="268.98" y2="853" class="gM"/>
<line x1="285.83" y1="0" x2="285.83" y2="853" class="gm"/>
<line x1="302.69" y1="0" x2="302.69" y2="853" class="gm"/>
<line x1="319.54" y1="0" x2="319.54" y2="853" class="gm"/>
<line x1="336.40" y1="0" x2="336.40" y2="853" class="gm"/>
<line x1="353.25" y1="0" x2="353.25" y2="853" class="gM"/>
<line x1="370.10" y1="0" x2="370.10" y2="853" class="gm"/>
<line x1="386.96" y1="0" x2="386.96" y2="853" class="gm"/>
<line x1="403.81" y1="0" x2="403.81" y2="853" class="gm"/>
<line x1="420.67" y1="0" x2="420.67" y2="853" class="gm"/>
<line x1="437.52" y1="0" x2="437.52" y2="853" class="gM"/>
<line x1="454.37" y1="0" x2="454.37" y2="853" class="gm"/>
<line x1="471.23" y1="0" x2="471.23" y2="853" class="gm"/>
<line x1="488.08" y1="0" x2="488.08" y2="853" class="gm"/>
<line x1="504.94" y1="0" x2="504.94" y2="853" class="gm"/>
<line x1="521.79" y1="0" x2="521.79" y2="853" class="gM"/>
<line x1="538.64" y1="0" x2="538.64" y2="853" class="gm"/>
<line x1="555.50" y1="0" x2="555.50" y2="853" class="gm"/>
<line x1="572.35" y1="0" x2="572.35" y2="853" class="gm"/>
<line x1="589.21" y1="0" x2="589.21" y2="853" class="gm"/>
<line x1="606.06" y1="0" x2="606.06" y2="853" class="gM"/>
<line x1="622.91" y1="0" x2="622.91" y2="853" class="gm"/>
<line x1="639.77" y1="0" x2="639.77" y2="853" class="gm"/>
<line x1="656.62" y1="0" x2="656.62" y2="853" class="gm"/>
<line x1="673.48" y1="0" x2="673.48" y2="853" class="gm"/>
<line x1="690.33" y1="0" x2="690.33" y2="853" class="gM"/>
<line x1="707.18" y1="0" x2="707.18" y2="853" class="gm"/>
<line x1="724.04" y1="0" x2="724.04" y2="853" class="gm"/>
<line x1="740.89" y1="0" x2="740.89" y2="853" class="gm"/>
<line x1="757.75" y1="0" x2="757.75" y2="853" class="gm"/>
<line x1="774.60" y1="0" x2="774.60" y2="853" class="gM"/>
<line x1="791.45" y1="0" x2="791.45" y2="853" class="gm"/>
<line x1="808.31" y1="0" x2="808.31" y2="853" class="gm"/>
<line x1="825.16" y1="0" x2="825.16" y2="853" class="gm"/>
<line x1="842.02" y1="0" x2="842.02" y2="853" class="gm"/>
<line x1="858.87" y1="0" x2="858.87" y2="853" class="gM"/>
<line x1="875.72" y1="0" x2="875.72" y2="853" class="gm"/>
<line x1="892.58" y1="0" x2="892.58" y2="853" class="gm"/>
<line x1="909.43" y1="0" x2="909.43" y2="853" class="gm"/>
<line x1="926.29" y1="0" x2="926.29" y2="853" class="gm"/>
<line x1="943.14" y1="0" x2="943.14" y2="853" class="gM"/>
<line x1="959.99" y1="0" x2="959.99" y2="853" class="gm"/>
<line x1="976.85" y1="0" x2="976.85" y2="853" class="gm"/>
<line x1="993.70" y1="0" x2="993.70" y2="853" class="gm"/>
<line x1="1010.56" y1="0" x2="1010.56" y2="853" class="gm"/>
<line x1="1027.41" y1="0" x2="1027.41" y2="853" class="gM"/>
<line x1="1044.26" y1="0" x2="1044.26" y2="853" class="gm"/>
<line x1="1061.12" y1="0" x2="1061.12" y2="853" class="gm"/>
<line x1="1077.97" y1="0" x2="1077.97" y2="853" class="gm"/>
<line x1="1094.83" y1="0" x2="1094.83" y2="853" class="gm"/>
<line x1="1111.68" y1="0" x2="1111.68" y2="853" class="gM"/>
<line x1="1128.53" y1="0" x2="1128.53" y2="853" class="gm"/>
<line x1="1145.39" y1="0" x2="1145.39" y2="853" class="gm"/>
<line x1="1162.24" y1="0" x2="1162.24" y2="853" class="gm"/>
<line x1="1179.10" y1="0" x2="1179.10" y2="853" class="gm"/>
<line x1="1195.95" y1="0" x2="1195.95" y2="853" class="gM"/>
<line x1="1212.80" y1="0" x2="1212.80" y2="853" class="gm"/>
<line x1="1229.66" y1="0" x2="1229.66" y2="853" class="gm"/>
<line x1="1246.51" y1="0" x2="1246.51" y2="853" class="gm"/>
<line x1="1263.37" y1="0" x2="1263.37" y2="853" class="gm"/>
<line x1="1280.22" y1="0" x2="1280.22" y2="853" class="gM"/>
<line x1="1297.07" y1="0" x2="1297.07" y2="853" class="gm"/>
<line x1="1313.93" y1="0" x2="1313.93" y2="853" class="gm"/>
<line x1="1330.78" y1="0" x2="1330.78" y2="853" class="gm"/>
<line x1="1347.64" y1="0" x2="1347.64" y2="853" class="gm"/>
<line x1="1364.49" y1="0" x2="1364.49" y2="853" class="gM"/>
<line x1="1381.34" y1="0" x2="1381.34" y2="853" class="gm"/>
<line x1="1398.20" y1="0" x2="1398.20" y2="853" class="gm"/>
<line x1="1415.05" y1="0" x2="1415.05" y2="853" class="gm"/>
<line x1="1431.91" y1="0" x2="1431.91" y2="853" class="gm"/>
<line x1="1448.76" y1="0" x2="1448.76" y2="853" class="gM"/>
<line x1="1465.61" y1="0" x2="1465.61" y2="853" class="gm"/>
<line x1="1482.47" y1="0" x2="1482.47" y2="853" class="gm"/>
<line x1="1499.32" y1="0" x2="1499.32" y2="853" class="gm"/>
<line x1="1516.18" y1="0" x2="1516.18" y2="853" class="gm"/>
<line x1="0" y1="1.66" x2="1518" y2="1.66" class="gm"/>
<line x1="0" y1="18.52" x2="1518" y2="18.52" class="gm"/>
<line x1="0" y1="35.37" x2="1518" y2="35.37" class="gM"/>
<line x1="0" y1="52.22" x2="1518" y2="52.22" class="gm"/>
<line x1="0" y1="69.08" x2="1518" y2="69.08" class="gm"/>
<line x1="0" y1="85.93" x2="1518" y2="85.93" class="gm"/>
<line x1="0" y1="102.79" x2="1518" y2="102.79" class="gm"/>
<line x1="0" y1="119.64" x2="1518" y2="119.64" class="gM"/>
<line x1="0" y1="136.49" x2="1518" y2="136.49" class="gm"/>
<line x1="0" y1="153.35" x2="1518" y2="153.35" class="gm"/>
<line x1="0" y1="170.20" x2="1518" y2="170.20" class="gm"/>
<line x1="0" y1="187.06" x2="1518" y2="187.06" class="gm"/>
<line x1="0" y1="203.91" x2="1518" y2="203.91" class="gM"/>
<line x1="0" y1="220.76" x2="1518" y2="220.76" class="gm"/>
<line x1="0" y1="237.62" x2="1518" y2="237.62" class="gm"/>
<line x1="0" y1="254.47" x2="1518" y2="254.47" class="gm"/>
<line x1="0" y1="271.33" x2="1518" y2="271.33" class="gm"/>
<line x1="0" y1="288.18" x2="1518" y2="288.18" class="gM"/>
<line x1="0" y1="305.03" x2="1518" y2="305.03" class="gm"/>
<line x1="0" y1="321.89" x2="1518" y2="321.89" class="gm"/>
<line x1="0" y1="338.74" x2="1518" y2="338.74" class="gm"/>
<line x1="0" y1="355.60" x2="1518" y2="355.60" class="gm"/>
<line x1="0" y1="372.45" x2="1518" y2="372.45" class="gM"/>
<line x1="0" y1="389.30" x2="1518" y2="389.30" class="gm"/>
<line x1="0" y1="406.16" x2="1518" y2="406.16" class="gm"/>
<line x1="0" y1="423.01" x2="1518" y2="423.01" class="gm"/>
<line x1="0" y1="439.87" x2="1518" y2="439.87" class="gm"/>
<line x1="0" y1="456.72" x2="1518" y2="456.72" class="gM"/>
<line x1="0" y1="473.57" x2="1518" y2="473.57" class="gm"/>
<line x1="0" y1="490.43" x2="1518" y2="490.43" class="gm"/>
<line x1="0" y1="507.28" x2="1518" y2="507.28" class="gm"/>
<line x1="0" y1="524.14" x2="1518" y2="524.14" class="gm"/>
<line x1="0" y1="540.99" x2="1518" y2="540.99" class="gM"/>
<line x1="0" y1="557.84" x2="1518" y2="557.84" class="gm"/>
<line x1="0" y1="574.70" x2="1518" y2="574.70" class="gm"/>
<line x1="0" y1="591.55" x2="1518" y2="591.55" class="gm"/>
<line x1="0" y1="608.41" x2="1518" y2="608.41" class="gm"/>
<line x1="0" y1="625.26" x2="1518" y2="625.26" class="gM"/>
<line x1="0" y1="642.11" x2="1518" y2="642.11" class="gm"/>
<line x1="0" y1="658.97" x2="1518" y2="658.97" class="gm"/>
<line x1="0" y1="675.82" x2="1518" y2="675.82" class="gm"/>
<line x1="0" y1="692.68" x2="1518" y2="692.68" class="gm"/>
<line x1="0" y1="709.53" x2="1518" y2="709.53" class="gM"/>
<line x1="0" y1="726.38" x2="1518" y2="726.38" class="gm"/>
<line x1="0" y1="743.24" x2="1518" y2="743.24" class="gm"/>
<line x1="0" y1="760.09" x2="1518" y2="760.09" class="gm"/>
<line x1="0" y1="776.95" x2="1518" y2="776.95" class="gm"/>
<line x1="0" y1="793.80" x2="1518" y2="793.80" class="gM"/>
<line x1="0" y1="810.65" x2="1518" y2="810.65" class="gm"/>
<line x1="0" y1="827.51" x2="1518" y2="827.51" class="gm"/>
<line x1="0" y1="844.36" x2="1518" y2="844.36" class="gm"/></svg>
<svg style="left:0;top:0" width="1518" height="853" viewBox="402 137 1518 853"><path d="M840.80 657.80 L1019.79 514.61 L1082.93 464.09 L1262.30 320.30 L1441.29 463.49 L1428.67 479.28 L1491.80 529.79 L1504.43 514.01 L1683.80 657.80 L1683.8 807.5 L1704 807.5 L1704 888.5 L1683.8 888.5 L1683.8 1000 L840.8 1000 L840.8 888.5 L820 888.5 L820 807.5 L840.8 807.5 Z" fill="rgba(170,210,250,0.176)"/>
<line x1="1176.6" y1="137" x2="1176.6" y2="990" stroke="#6fd66f" stroke-width="1.3"/>
<path d="M840.80 657.80 L1019.79 514.61 L1082.93 464.09 L1262.30 320.30 L1441.29 463.49 L1428.67 479.28 L1491.80 529.79 L1504.43 514.01 L1683.80 657.80 L1683.8 807.5 L1704 807.5 L1704 888.5 L1683.8 888.5 L1683.8 1000 L840.8 1000 L840.8 888.5 L820 888.5 L820 807.5 L840.8 807.5 Z" fill="none" stroke="#6ec3ea" stroke-width="2" stroke-linejoin="miter"/>
<path d="M1019.79 514.61 L1032.42 530.39 L1095.56 479.88 L1082.93 464.09" fill="none" stroke="#6ec3ea" stroke-width="2"/>
<path d="M836.74 652.72 L781.14 583.23 M1015.73 509.53 L960.14 440.03" stroke="#1e1e1e" stroke-width="1.25"/><path d="M784.58 587.52 L963.57 444.33" stroke="#1e1e1e" stroke-width="1.25"/><path d="M784.58 587.52 L792.32 578.00 L795.57 582.06Z" fill="#1e1e1e"/><path d="M963.57 444.33 L955.82 453.85 L952.58 449.79Z" fill="#1e1e1e"/>
<path d="M1078.87 459.02 L1026.40 393.43 M1258.24 315.22 L1205.77 249.63" stroke="#1e1e1e" stroke-width="1.25"/><path d="M1029.83 397.72 L1209.20 253.93" stroke="#1e1e1e" stroke-width="1.25"/><path d="M1029.83 397.72 L1037.57 388.19 L1040.82 392.24Z" fill="#1e1e1e"/><path d="M1209.20 253.93 L1201.46 263.46 L1198.21 259.40Z" fill="#1e1e1e"/>
<path d="M1266.36 315.22 L1318.83 249.63 M1687.86 652.72 L1740.33 587.13" stroke="#1e1e1e" stroke-width="1.25"/><path d="M1315.40 253.93 L1736.90 591.43" stroke="#1e1e1e" stroke-width="1.25"/><path d="M1315.40 253.93 L1326.39 259.40 L1323.14 263.46Z" fill="#1e1e1e"/><path d="M1736.90 591.43 L1725.91 585.96 L1729.16 581.90Z" fill="#1e1e1e"/>
<path d="M1036.17 535.07 L1086.14 597.54 M1099.31 484.56 L1149.28 547.03" stroke="#1e1e1e" stroke-width="1.25"/><path d="M1083.02 593.64 L1146.16 543.13" stroke="#1e1e1e" stroke-width="1.25"/><path d="M1083.02 593.64 L1090.77 584.11 L1094.02 588.17Z" fill="#1e1e1e"/><path d="M1146.16 543.13 L1138.41 552.66 L1135.16 548.60Z" fill="#1e1e1e"/>
<path d="M1084.81 466.44 L1093.55 477.37" stroke="#1e1e1e" stroke-width="1.1"/><path d="M1095.11 479.32 L1087.15 472.89 L1090.58 470.14Z" fill="#1e1e1e"/>
<path d="M1097.12 478.63 L1101.81 474.88" stroke="#1e1e1e" stroke-width="1.1"/>
<path d="M1710 807.5 H1863 M1710 888.5 H1863 M1857.2 817.5 V878.5" stroke="#1e1e1e" stroke-width="1.25"/>
<path d="M1857.20 807.50 L1859.80 819.50 L1854.60 819.50Z" fill="#1e1e1e"/><path d="M1857.20 888.50 L1854.60 876.50 L1859.80 876.50Z" fill="#1e1e1e"/>
<text x="857" y="516" transform="rotate(-38.66 857 516)" font-size="14" fill="#3c3c3c" text-anchor="middle" dominant-baseline="central" font-family="Liberation Sans">136.078</text>
<text x="1095" y="335.5" transform="rotate(-38.66 1095 335.5)" font-size="14" fill="#3c3c3c" text-anchor="middle" dominant-baseline="central" font-family="Liberation Sans">136.078</text>
<text x="1565.8" y="439.2" transform="rotate(38.66 1565.8 439.2)" font-size="14" fill="#3c3c3c" text-anchor="middle" dominant-baseline="central" font-family="Liberation Sans">320.156</text>
<text x="1108.1" y="558.5" transform="rotate(-38.66 1108.1 558.5)" font-size="14" fill="#3c3c3c" text-anchor="middle" dominant-baseline="central" font-family="Liberation Sans">48.00</text>
<text x="1098.5" y="465.8" transform="rotate(51.34 1098.5 465.8)" font-size="14" fill="#3c3c3c" text-anchor="middle" dominant-baseline="central" font-family="Liberation Sans">12.00</text>
<text x="1846.2" y="848.3" transform="rotate(-90.00 1846.2 848.3)" font-size="14" fill="#3c3c3c" text-anchor="middle" dominant-baseline="central" font-family="Liberation Sans">48.00</text>
<text x="1186.7" y="914.4" transform="rotate(90.00 1186.7 914.4)" font-size="14" fill="#555" text-anchor="middle" dominant-baseline="central" font-family="Liberation Sans">250</text>
<g transform="translate(929.8 601.7) rotate(-38.66)" fill="#ececec" stroke="#8c8c8c" stroke-width="1.1"><rect x="-8" y="-10" width="12.5" height="3.4" rx="1.7"/><rect x="-11" y="0" width="25" height="3.4" rx="1.7"/><path d="M-4.5 -6 L-1 -6.2 L1.5 -0.3 L-3.5 -1.5 Z" fill="#f4f4f4"/></g>
<g transform="translate(1172.2 408) rotate(-38.66)" fill="#ececec" stroke="#8c8c8c" stroke-width="1.1"><rect x="-8" y="-10" width="12.5" height="3.4" rx="1.7"/><rect x="-11" y="0" width="25" height="3.4" rx="1.7"/><path d="M-4.5 -6 L-1 -6.2 L1.5 -0.3 L-3.5 -1.5 Z" fill="#f4f4f4"/></g>
<g transform="translate(1035 515) rotate(-38.66)" fill="#e8e8e8" stroke="#8a8a8a" stroke-width="1.1"><rect x="-7" y="-1" width="14" height="3.2" rx="1.6"/><rect x="-7" y="-11" width="3.2" height="13" rx="1.6"/></g>
<g transform="translate(1082 480) rotate(1.34)" fill="#e8e8e8" stroke="#8a8a8a" stroke-width="1.1"><rect x="-6" y="-9" width="12" height="3" rx="1.5"/><rect x="-1.5" y="-7" width="3" height="16" rx="1.5"/></g></svg>
<div class="a" style="left:4px;top:5px;width:300px;height:25px;background:#f2f2f2;border:1px solid #cdcdcd"></div>
<svg style="left:8.00px;top:14.00px" width="12" height="8" viewBox="410 151 12 8"><path d="M410.9 154.8 L416 151.9 V157.8Z M416 154.8 L421.2 151.9 V157.8Z" fill="#333"/></svg>
<div class="a" style="left:29.10px;top:10.91px;font-size:11px;line-height:13px;color:#666;white-space:nowrap;transform:scaleX(0.950);transform-origin:0 0;">NAVEGADOR</div>
<svg style="left:282.00px;top:12.00px" width="22" height="12" viewBox="684 149 22 12"><circle cx="689.6" cy="154.6" r="4.6" fill="#333"/><rect x="687" y="154" width="5.2" height="1.3" fill="#fff"/><path d="M701.8 150 V160" stroke="#666" stroke-width="0.9"/><path d="M703.8 151.5 V158.5" stroke="#aaa" stroke-width="0.8"/></svg>
<svg style="left:19.00px;top:38.00px" width="15" height="14" viewBox="421 175 15 14"><defs><linearGradient id="tg" x1="0" y1="0" x2="1" y2="0"><stop offset="0" stop-color="#bbb"/><stop offset="1" stop-color="#333"/></linearGradient></defs><path d="M422.5 187.7 L434.4 176.2 V187.7Z" fill="url(#tg)" stroke="#333" stroke-width="0.8"/></svg>
<div class="a" style="left:40px;top:35px;width:212px;height:20px;background:#efefef"></div>
<svg style="left:41.00px;top:37.00px" width="20" height="14" viewBox="443 174 20 14"><path d="M445 181.5 Q453 174.5 461 181.5 Q453 188.5 445 181.5Z" fill="#9a9a9a"/><circle cx="453" cy="181.5" r="2.6" fill="#efefef"/><circle cx="453" cy="181.5" r="1.3" fill="#9a9a9a"/></svg>
<div class="a" style="left:65px;top:37px;width:162px;height:16px;background:#8c8c8c"></div>
<svg style="left:66.00px;top:37.00px" width="20" height="17" viewBox="468 174 20 17"><path d="M471 176.5 L474 174.8 H485 V187.5 L482 189.2 H471Z" fill="#e8e8e8" stroke="#333" stroke-width="0.9"/><path d="M471 176.5 H482 L485 174.8 M482 176.5 V189.2" fill="none" stroke="#333" stroke-width="0.6"/><rect x="471.5" y="177" width="10" height="11.7" fill="#d9dde3"/></svg>
<div class="a" style="left:98.40px;top:38.78px;font-size:11.7px;line-height:13px;font-weight:bold;color:#fff;white-space:nowrap;transform:scaleX(0.900);transform-origin:0 0;">FRONTAL MUESTRA v1</div>
<svg style="left:229.00px;top:37.00px" width="17" height="17" viewBox="631 174 17 17"><circle cx="639.6" cy="182" r="6.2" fill="#f5f5f5" stroke="#333" stroke-width="1.2"/><circle cx="639.6" cy="182" r="2.4" fill="#333"/></svg>
<svg style="left:39.00px;top:62.20px" width="12" height="14" viewBox="441 199.2 12 14"><path d="M442.8 200.79999999999998 L451 206.49999999999997 L442.8 212.2Z" fill="none" stroke="#333" stroke-width="1.2" stroke-linejoin="round"/></svg>
<div class="a" style="left:58px;top:59.20px;width:182.0px;height:19.5px;background:#efefef"></div>
<svg style="left:60.00px;top:60.20px" width="18" height="18" viewBox="462 197.2 18 18"><polygon points="478.60,206.00 476.36,208.22 476.37,211.37 473.22,211.36 471.00,213.60 468.78,211.36 465.63,211.37 465.64,208.22 463.40,206.00 465.64,203.78 465.63,200.63 468.78,200.64 471.00,198.40 473.22,200.64 476.37,200.63 476.36,203.78" fill="#9a9a9a" stroke="#9a9a9a" stroke-width="1.2" stroke-linejoin="round"/><circle cx="471" cy="206.0" r="2.6" fill="#efefef"/></svg>
<div class="a" style="left:91.30px;top:62.81px;font-size:11px;line-height:13px;color:#444;white-space:nowrap;transform:scaleX(0.975);transform-origin:0 0;">Configuración del documento</div>
<svg style="left:39.00px;top:86.20px" width="12" height="14" viewBox="441 223.2 12 14"><path d="M442.8 224.79999999999998 L451 230.49999999999997 L442.8 236.2Z" fill="none" stroke="#333" stroke-width="1.2" stroke-linejoin="round"/></svg>
<div class="a" style="left:58px;top:83.20px;width:130.0px;height:19.5px;background:#efefef"></div>
<svg style="left:60.00px;top:85.20px" width="18" height="16" viewBox="462 222.2 18 16"><path d="M463 224.2 H469 L470 226.2 H479 V237.2 H463Z" fill="#9a9a9a"/><path d="M463 227.2 H479" stroke="#efefef" stroke-width="0.8"/></svg>
<div class="a" style="left:91.30px;top:86.81px;font-size:11px;line-height:13px;color:#444;white-space:nowrap;">Vistas guardadas</div>
<svg style="left:39.00px;top:110.20px" width="12" height="14" viewBox="441 247.2 12 14"><path d="M442.8 248.79999999999998 L451 254.49999999999997 L442.8 260.2Z" fill="none" stroke="#333" stroke-width="1.2" stroke-linejoin="round"/></svg>
<div class="a" style="left:58px;top:107.20px;width:98.7px;height:19.5px;background:#efefef"></div>
<svg style="left:60.00px;top:109.20px" width="18" height="16" viewBox="462 246.2 18 16"><path d="M463 254.2 Q471 247.2 479 254.2 Q471 261.2 463 254.2Z" fill="none" stroke="#b0b0b0" stroke-width="1.1"/><circle cx="471" cy="254.2" r="2.3" fill="none" stroke="#b0b0b0" stroke-width="1.1"/><path d="M464.5 248.2 L477.5 260.2" stroke="#b0b0b0" stroke-width="1.1"/></svg>
<svg style="left:85.00px;top:109.20px" width="18" height="16" viewBox="487 246.2 18 16"><path d="M488 248.2 H494 L495 250.2 H504 V261.2 H488Z" fill="#9a9a9a"/><path d="M488 251.2 H504" stroke="#efefef" stroke-width="0.8"/></svg>
<div class="a" style="left:116.00px;top:110.81px;font-size:11px;line-height:13px;color:#444;white-space:nowrap;">Origen</div>
<svg style="left:39.00px;top:134.20px" width="12" height="14" viewBox="441 271.2 12 14"><path d="M442.8 272.8 L451 278.5 L442.8 284.2Z" fill="none" stroke="#333" stroke-width="1.2" stroke-linejoin="round"/></svg>
<div class="a" style="left:58px;top:131.20px;width:106.7px;height:19.5px;background:#efefef"></div>
<svg style="left:60.00px;top:133.20px" width="18" height="16" viewBox="462 270.2 18 16"><path d="M463 278.2 Q471 271.2 479 278.2 Q471 285.2 463 278.2Z" fill="#9a9a9a"/><circle cx="471" cy="278.2" r="2.6" fill="#efefef"/><circle cx="471" cy="278.2" r="1.3" fill="#9a9a9a"/></svg>
<svg style="left:85.00px;top:133.20px" width="18" height="16" viewBox="487 270.2 18 16"><path d="M488 272.2 H494 L495 274.2 H504 V285.2 H488Z" fill="#9a9a9a"/><path d="M488 275.2 H504" stroke="#efefef" stroke-width="0.8"/></svg>
<div class="a" style="left:116.00px;top:134.81px;font-size:11px;line-height:13px;color:#444;white-space:nowrap;">Bocetos</div>
<div class="a" style="left:426.2px;top:5.3px;width:328px;height:153.5px;background:#4e4e4e;border-radius:7px"></div>
<div class="a" style="left:440.00px;top:8.78px;font-size:11.9px;line-height:14px;font-weight:bold;color:#f2f2f2;white-space:nowrap;transform:scaleX(1.070);transform-origin:0 0;">Recortar (t)</div>
<div class="a" style="left:440.00px;top:29.68px;font-size:11.9px;line-height:14px;font-weight:bold;color:#f2f2f2;white-space:nowrap;">Recorta una curva de boceto hasta la curva</div>
<div class="a" style="left:440.00px;top:42.48px;font-size:11.9px;line-height:14px;font-weight:bold;color:#f2f2f2;white-space:nowrap;">intersecante más cercana o la geometría de</div>
<div class="a" style="left:440.00px;top:55.78px;font-size:11.9px;line-height:14px;font-weight:bold;color:#f2f2f2;white-space:nowrap;">contorno.</div>
<div class="a" style="left:440.00px;top:81.68px;font-size:11.9px;line-height:14px;font-weight:bold;color:#f2f2f2;white-space:nowrap;">Detenga el cursor sobre la curva para obtener una</div>
<div class="a" style="left:440.00px;top:94.38px;font-size:11.9px;line-height:14px;font-weight:bold;color:#f2f2f2;white-space:nowrap;">vista preliminar de la parte que desea recortar.</div>
<div class="a" style="left:440.00px;top:107.58px;font-size:11.9px;line-height:14px;font-weight:bold;color:#f2f2f2;white-space:nowrap;">Seleccione la curva a recortar.</div>
<div class="a" style="left:440.00px;top:141.88px;font-size:11.9px;line-height:14px;font-weight:bold;color:#f2f2f2;white-space:nowrap;">Pulse Ctrl+/ para obtener más ayuda.</div>
<svg style="left:1413.00px;top:18.00px" width="90" height="95" viewBox="1815 155 90 95">
<defs><linearGradient id="vc" x1="0" y1="0" x2="0" y2="1"><stop offset="0" stop-color="#efefef"/><stop offset="1" stop-color="#d8d8d8"/></linearGradient>
<radialGradient id="vsh" cx="0.5" cy="0.5" r="0.5"><stop offset="0" stop-color="#000" stop-opacity="0.18"/><stop offset="1" stop-color="#000" stop-opacity="0"/></radialGradient></defs>
<ellipse cx="1857" cy="230" rx="38" ry="6" fill="url(#vsh)"/>
<rect x="1830.2" y="175" width="52.2" height="52.4" fill="url(#vc)" fill-opacity="0.9" stroke="#9a9a9a" stroke-width="1"/>
<rect x="1840" y="185" width="32.5" height="32.5" fill="#d6dade" opacity="0.55"/>
<path d="M1831.5 161.5 H1838.5 L1831.5 171.5 H1838.5" fill="none" stroke="#7b7bf0" stroke-width="1.3"/>
<path d="M1834.5 172 V175" stroke="#7b7bf0" stroke-width="1"/>
<path d="M1824 225.5 L1831.5 235.5 M1831.5 225.5 L1824 235.5" stroke="#f08a8a" stroke-width="1.4"/>
<path d="M1882.4 224 H1886" stroke="#70d870" stroke-width="1.2"/>
<path d="M1887 217.8 L1890.8 222.5 L1894.6 217.8 M1890.8 222.5 V227.5" fill="none" stroke="#70d870" stroke-width="1.4"/>
</svg>
<div class="a" style="left:1433.80px;top:58.69px;font-size:12px;line-height:14px;font-weight:bold;color:#83878b;white-space:nowrap;transform:scaleX(0.710);transform-origin:0 0;">DERECHA</div>
<div class="a" style="left:1492.2px;top:125px;width:21.5px;height:188.5px;background:#f0f0f0"></div>
<svg style="left:1496.00px;top:131.00px" width="14" height="10" viewBox="1898 268 14 10"><path d="M1899.5 272.8 L1904.3 270 V275.6Z M1904.3 272.8 L1909.1 270 V275.6Z" fill="#333"/></svg>
<div class="a" style="left:1449.2px;top:248.1px;width:108px;height:13px;font-size:11px;line-height:13px;color:#444;text-align:center;white-space:nowrap;transform:rotate(-90deg) scaleX(0.887)">PALETA DE BOCETO</div>
<div class="a" style="left:4px;top:824px;width:300px;height:25px;background:#f2f2f2;border:1px solid #cdcdcd"></div>
<div class="a" style="left:29.30px;top:829.71px;font-size:11px;line-height:13px;color:#666;white-space:nowrap;transform:scaleX(0.895);transform-origin:0 0;">COMENTARIOS</div>
<svg style="left:282.00px;top:831.00px" width="22" height="12" viewBox="684 968 22 12"><circle cx="689.5" cy="973.5" r="4.6" fill="#333"/><path d="M687 973.5 H692 M689.5 971 V976" stroke="#fff" stroke-width="1.2"/><path d="M701.8 969 V979" stroke="#666" stroke-width="0.9"/><path d="M703.8 970.5 V977.5" stroke="#aaa" stroke-width="0.8"/></svg>
<div class="a" style="left:640.2px;top:825px;width:236.3px;height:23.5px;background:#f0f0f0"></div>
<svg style="left:640.00px;top:825.00px" width="237" height="24" viewBox="1042 962 237 24"><path d="M1052.8 967 V982" stroke="#444" stroke-width="2.2"/><path d="M1049.8 970 L1052.8 966 L1055.8 970" fill="none" stroke="#444" stroke-width="1.2"/><ellipse cx="1053" cy="975.5" rx="7.6" ry="3.2" fill="none" stroke="#444" stroke-width="1.3"/><path d="M1045 977.5 L1048 975 V980Z" fill="#333"/><path d="M1066.3 972 H1071.7 L1069.0 975.5Z" fill="#333"/><rect x="1078.5" y="971.5" width="15.5" height="10" fill="#e8e8e8" stroke="#444" stroke-width="1.1"/><rect x="1081" y="975" width="10.5" height="3.5" fill="#8a96a8"/><path d="M1079 971 L1081 967 L1085 969.5 L1089 967.5 L1093 969.5 V971" fill="#666" stroke="#444" stroke-width="0.9"/><path d="M1107 981.5 L1104.5 975.5 Q1104 973.5 1106 974.5 L1107.5 976.5 V968.5 Q1108.5 967 1109.5 968.5 V974 V967 Q1110.8 965.5 1112 967 V974 V967.8 Q1113.3 966.5 1114.5 968 V974.5 V969.8 Q1115.7 968.5 1117 970 V977 Q1117 981 1114 982Z" fill="#f4f4f4" stroke="#444" stroke-width="1.1"/><circle cx="1136" cy="975.5" r="4.8" fill="#d8e6ea" stroke="#444" stroke-width="1.3"/><path d="M1139.5 979 L1143 982.5" stroke="#444" stroke-width="2.4"/><path d="M1143.5 967 V972 M1141 969.5 H1146" stroke="#444" stroke-width="1.1"/><rect x="1156.2" y="966.5" width="16" height="15.5" fill="none" stroke="#444" stroke-width="0.9" stroke-dasharray="1.6 1.2"/><circle cx="1163" cy="973.5" r="5.6" fill="#dfe9ec" stroke="#444" stroke-width="1.3"/><path d="M1167 977.5 L1171 981.5" stroke="#444" stroke-width="2.4"/><path d="M1177.6 972 H1183.0 L1180.3 975.5Z" fill="#333"/><rect x="1189.5" y="966.5" width="15.5" height="12" rx="1" fill="#e8e8e8" stroke="#444" stroke-width="1.1"/><rect x="1191.5" y="968.5" width="11.5" height="8" fill="#7fa4d6" stroke="#3a5a90" stroke-width="0.7"/><path d="M1195 979 H1199.5 V981 H1195Z" fill="#ccc" stroke="#444" stroke-width="0.7"/><path d="M1207.4 972 H1212.8000000000002 L1210.1000000000001 975.5Z" fill="#333"/><rect x="1220.5" y="966.5" width="15.5" height="15.5" fill="#555"/><rect x="1221.80" y="967.80" width="1.3" height="1.3" fill="#d8d8d8"/><rect x="1221.80" y="970.25" width="1.3" height="1.3" fill="#d8d8d8"/><rect x="1221.80" y="972.70" width="1.3" height="1.3" fill="#d8d8d8"/><rect x="1221.80" y="975.15" width="1.3" height="1.3" fill="#d8d8d8"/><rect x="1221.80" y="977.60" width="1.3" height="1.3" fill="#d8d8d8"/><rect x="1221.80" y="980.05" width="1.3" height="1.3" fill="#d8d8d8"/><rect x="1224.25" y="967.80" width="1.3" height="1.3" fill="#d8d8d8"/><rect x="1224.25" y="970.25" width="1.3" height="1.3" fill="#d8d8d8"/><rect x="1224.25" y="972.70" width="1.3" height="1.3" fill="#d8d8d8"/><rect x="1224.25" y="975.15" width="1.3" height="1.3" fill="#d8d8d8"/><rect x="1224.25" y="977.60" width="1.3" height="1.3" fill="#d8d8d8"/><rect x="1224.25" y="980.05" width="1.3" height="1.3" fill="#d8d8d8"/><rect x="1226.70" y="967.80" width="1.3" height="1.3" fill="#d8d8d8"/><rect x="1226.70" y="970.25" width="1.3" height="1.3" fill="#d8d8d8"/><rect x="1226.70" y="972.70" width="1.3" height="1.3" fill="#d8d8d8"/><rect x="1226.70" y="975.15" width="1.3" height="1.3" fill="#d8d8d8"/><rect x="1226.70" y="977.60" width="1.3" height="1.3" fill="#d8d8d8"/><rect x="1226.70" y="980.05" width="1.3" height="1.3" fill="#d8d8d8"/><rect x="1229.15" y="967.80" width="1.3" height="1.3" fill="#d8d8d8"/><rect x="1229.15" y="970.25" width="1.3" height="1.3" fill="#d8d8d8"/><rect x="1229.15" y="972.70" width="1.3" height="1.3" fill="#d8d8d8"/><rect x="1229.15" y="975.15" width="1.3" height="1.3" fill="#d8d8d8"/><rect x="1229.15" y="977.60" width="1.3" height="1.3" fill="#d8d8d8"/><rect x="1229.15" y="980.05" width="1.3" height="1.3" fill="#d8d8d8"/><rect x="1231.60" y="967.80" width="1.3" height="1.3" fill="#d8d8d8"/><rect x="1231.60" y="970.25" width="1.3" height="1.3" fill="#d8d8d8"/><rect x="1231.60" y="972.70" width="1.3" height="1.3" fill="#d8d8d8"/><rect x="1231.60" y="975.15" width="1.3" height="1.3" fill="#d8d8d8"/><rect x="1231.60" y="977.60" width="1.3" height="1.3" fill="#d8d8d8"/><rect x="1231.60" y="980.05" width="1.3" height="1.3" fill="#d8d8d8"/><rect x="1234.05" y="967.80" width="1.3" height="1.3" fill="#d8d8d8"/><rect x="1234.05" y="970.25" width="1.3" height="1.3" fill="#d8d8d8"/><rect x="1234.05" y="972.70" width="1.3" height="1.3" fill="#d8d8d8"/><rect x="1234.05" y="975.15" width="1.3" height="1.3" fill="#d8d8d8"/><rect x="1234.05" y="977.60" width="1.3" height="1.3" fill="#d8d8d8"/><rect x="1234.05" y="980.05" width="1.3" height="1.3" fill="#d8d8d8"/><path d="M1238.5 972 H1243.9 L1241.2 975.5Z" fill="#333"/><rect x="1251.2" y="967" width="14.6" height="14" fill="#2f4f8f"/><rect x="1252.6" y="968.4" width="5.2" height="4.6" fill="#9bb8e0"/><rect x="1259.2" y="968.4" width="5.2" height="4.6" fill="#9bb8e0"/><rect x="1252.6" y="975" width="5.2" height="4.6" fill="#9bb8e0"/><rect x="1259.2" y="975" width="5.2" height="4.6" fill="#9bb8e0"/><path d="M1269 972 H1274.4 L1271.7 975.5Z" fill="#333"/></svg>
</div>
<div id="tl" class="a"><svg style="left:0.00px;top:0.00px" width="1518" height="47" viewBox="402 993 1518 47"><rect x="413" y="1010.3" width="2.2" height="13.5" fill="#444"/><path d="M425 1010.3 V1023.8 L415.8 1017Z" fill="#444"/><path d="M437 1017 L446 1010.3 V1023.8Z" fill="#444"/><rect x="447.3" y="1013.3" width="2.5" height="7.5" fill="#444"/><path d="M463 1009.8 L474.7 1017 L463 1024.6Z" fill="#444"/><rect x="486.8" y="1013.3" width="2.5" height="7.5" fill="#444"/><path d="M490.5 1010.3 V1023.8 L499.7 1017Z" fill="#444"/><path d="M513 1010.3 V1023.8 L522.3 1017Z" fill="#444"/><rect x="522.8" y="1010.3" width="2.2" height="13.5" fill="#444"/><rect x="556.3" y="1027" width="2" height="6" fill="#c8c8c8"/><rect x="544.2" y="1004" width="23.3" height="23.8" rx="2" fill="#1594dc"/><rect x="549.2" y="1008.8" width="12.5" height="12.5" fill="none" stroke="#3b3b3b" stroke-width="1" stroke-dasharray="2.2 1.2"/><path d="M556.5 1022.5 L563.5 1015.5" stroke="#f2c230" stroke-width="3.2"/><path d="M563 1016 L565.5 1013.5" stroke="#e23c3c" stroke-width="3.2"/><path d="M555.2 1024 L557 1022" stroke="#555" stroke-width="1.5"/><path d="M562 1002.2 H574 V1005 L569.5 1010 H567 L562 1005Z" fill="#666"/><rect x="567.3" y="1009" width="2.2" height="24" fill="#555"/><polygon points="1906.75,1018.46 1904.06,1020.34 1903.34,1023.55 1900.11,1022.98 1897.34,1024.75 1895.46,1022.06 1892.25,1021.34 1892.82,1018.11 1891.05,1015.34 1893.74,1013.46 1894.46,1010.25 1897.69,1010.82 1900.46,1009.05 1902.34,1011.74 1905.55,1012.46 1904.98,1015.69" fill="#999" stroke="#999" stroke-width="0.8" stroke-linejoin="round"/><circle cx="1898.9" cy="1016.9" r="2.8" fill="#f1f1f1"/></svg>
<div class="a" style="left:0;top:45.5px;width:1518px;height:1.5px;background:#fafafa"></div></div>
<div id="task" class="a"><div class="a" style="left:48px;top:0;width:344px;height:40px;background:#4b4b4b;border:1px solid #5c5c5c;border-bottom:none"></div>
<div class="a" style="left:785px;top:0;width:47.5px;height:40px;background:#343434"></div>
<div class="a" style="left:740px;top:38px;width:40px;height:2px;background:#a3a3a3"></div>
<div class="a" style="left:785px;top:38px;width:47.5px;height:2px;background:#a3a3a3"></div>
<svg style="left:0;top:0" width="1920" height="40" viewBox="0 1040 1920 40"><path d="M15.8 1053 L22.8 1052 V1059.4 H15.8Z M23.8 1051.9 L32 1050.8 V1059.4 H23.8Z M15.8 1060.4 H22.8 V1067.8 L15.8 1066.8Z M23.8 1060.4 H32 V1069 L23.8 1067.9Z" fill="#fff"/><circle cx="71" cy="1057.5" r="5.3" fill="none" stroke="#e6e6e6" stroke-width="1.3"/><path d="M67.2 1061.3 L60.5 1068" stroke="#e6e6e6" stroke-width="1.5"/><circle cx="415.6" cy="1060" r="6.8" fill="none" stroke="#fff" stroke-width="2"/><rect x="457.5" y="1054.5" width="11" height="11" fill="none" stroke="#fff" stroke-width="1.5"/><path d="M455.5 1052 H470.5 M455.5 1068 H470.5 M472 1053 V1058 M472 1062 V1067" stroke="#fff" stroke-width="1.3"/><defs><linearGradient id="edg" x1="0" y1="0" x2="1" y2="1"><stop offset="0" stop-color="#36c07a"/><stop offset="0.5" stop-color="#1a9ee0"/><stop offset="1" stop-color="#0b63b8"/></linearGradient></defs><circle cx="514.8" cy="1059.3" r="11.7" fill="url(#edg)"/><path d="M507 1061 Q508 1053 515.5 1053 Q521.5 1053.5 522.5 1059 H511 Q511 1064.5 516 1066 Q520 1067 524 1065.5 Q519.5 1071.5 512 1070 Q506 1068 507 1061Z" fill="#1c1c1c" opacity="0.35"/><path d="M510.5 1060 Q511 1055.5 515.5 1055.5 Q519.5 1056 520 1059" fill="none" stroke="#9be6b8" stroke-width="1.3"/><circle cx="563.8" cy="1059.3" r="10.8" fill="#1c1c1c" stroke="#d8232a" stroke-width="1.6"/><circle cx="563.8" cy="1059.3" r="6" fill="none" stroke="#d8232a" stroke-width="2"/><path d="M563.8 1051 L569 1056 H558.6Z" fill="#d8232a"/><path d="M601.8 1051 H609.5 L611.5 1053 H623.8 V1067.5 H601.8Z" fill="#e9b536"/><path d="M601.8 1055.5 H623.8 V1067.5 H601.8Z" fill="#f9d05a"/><rect x="608" y="1062.5" width="10" height="8" fill="#2a8ad8"/><rect x="610.5" y="1065" width="5" height="5.5" fill="#1c1c1c"/><rect x="649.5" y="1053" width="23.5" height="18" rx="2.5" fill="#f2f2f2"/><path d="M655 1053.5 V1050.5 Q655 1048.5 657 1048.5 H665.5 Q667.5 1048.5 667.5 1050.5 V1053.5" fill="none" stroke="#3aa0e8" stroke-width="1.8"/><rect x="657" y="1057" width="3.6" height="3.6" fill="#f25022"/><rect x="661.4" y="1057" width="3.6" height="3.6" fill="#7fba00"/><rect x="657" y="1061.4" width="3.6" height="3.6" fill="#00a4ef"/><rect x="661.4" y="1061.4" width="3.6" height="3.6" fill="#ffb900"/><path d="M698.8 1055.5 L711.5 1048.8 L724 1055.5 V1071 H698.8Z" fill="#1e88e5"/><path d="M698.8 1055.5 L711.5 1063 L724 1055.5" fill="#8fd0ff" stroke="#d6efff" stroke-width="0.8"/><path d="M698.8 1071 L711.5 1061.5 L724 1071Z" fill="#42a5f5"/><circle cx="723.5" cy="1067" r="7.6" fill="#2c2c2c" stroke="#8a8a8a" stroke-width="1"/><text x="723.5" y="1071.5" font-size="11" fill="#fff" text-anchor="middle" font-family="Liberation Sans">1</text><ellipse cx="759.5" cy="1059.5" rx="11.5" ry="12" fill="#e0141e"/><ellipse cx="759.5" cy="1059.5" rx="4.6" ry="8.4" fill="#1c1c1c"/><ellipse cx="759.5" cy="1059.5" rx="4" ry="8" fill="#5a0a0e" opacity="0.4"/><rect x="797" y="1048" width="23.8" height="23.5" fill="#f9e3c6"/><path d="M803 1051 L815.5 1050 V1054.5 L808 1055 V1058 L814 1057.8 V1062 L808 1062.3 V1068.5 L803 1069Z" fill="#e69a3e"/><path d="M808 1055 L815.5 1054.5 L812 1056.5Z" fill="#c4761e"/><text x="815" y="1069" font-size="3.5" fill="#d08a4a" font-family="Liberation Sans">360</text><path d="M1486 1052 Q1481 1055 1484 1060 Q1488 1063 1492 1058 Q1487 1058 1486 1052Z" fill="#f7c948"/><path d="M1483 1069.5 Q1478 1069.5 1478.5 1065 Q1479 1061 1483.5 1061.5 Q1485.5 1057 1491 1057.5 Q1496 1058 1497 1063 Q1500.5 1063.5 1500 1067 Q1499.5 1069.5 1496 1069.5Z" fill="#d9e6f2"/><circle cx="1497.5" cy="1068.7" r="3.2" fill="#e81123"/><path d="M1647.3 1063.5 L1653 1057.5 L1658.8 1063.5" fill="none" stroke="#fff" stroke-width="1.3"/><path d="M1670 1055 Q1673 1053 1675 1053.5 L1675.8 1055 H1678.5 L1679.3 1053.5 Q1681.5 1053 1684.5 1055 Q1685.5 1060 1684 1065.5 Q1682 1067 1680 1067 L1679 1065.5 Q1677.2 1066 1675.5 1065.5 L1674.5 1067 Q1672 1067 1670.5 1065.5 Q1669 1060 1670 1055Z" fill="#fff"/><circle cx="1674.8" cy="1060.5" r="1.5" fill="#1c1c1c"/><circle cx="1679.8" cy="1060.5" r="1.5" fill="#1c1c1c"/><path d="M1695 1066 Q1692.5 1066 1692.5 1063.3 Q1692.7 1060.5 1695.8 1060.5 Q1697 1056 1701.5 1056.3 Q1705 1056.5 1706 1060 Q1709.5 1060.3 1709.5 1063 Q1709.5 1066 1706.5 1066Z" fill="#fff"/><rect x="1720" y="1053.5" width="13" height="10" fill="none" stroke="#fff" stroke-width="1.2"/><path d="M1726.5 1063.5 V1067 M1722.5 1067.5 H1730.5" stroke="#fff" stroke-width="1.2"/><rect x="1716.5" y="1051.5" width="5.5" height="5.5" fill="#1c1c1c" stroke="#fff" stroke-width="1"/><path d="M1741.5 1057 H1744.5 L1748.5 1053 V1067 L1744.5 1063 H1741.5Z" fill="none" stroke="#fff" stroke-width="1.2"/><path d="M1751 1057 Q1753 1060 1751 1063 M1753.5 1055 Q1757 1060 1753.5 1065" fill="none" stroke="#fff" stroke-width="1.1"/><path d="M1756 1053 Q1760.5 1060 1756 1067" fill="none" stroke="#888" stroke-width="1.1"/><path d="M1879.5 1052.5 H1895 V1064.5 H1889.5 L1887 1067.5 L1884.5 1064.5 H1879.5Z" fill="none" stroke="#fff" stroke-width="1.2"/><path d="M1915.5 1040 V1080" stroke="#555" stroke-width="1"/></svg>
<div class="a" style="left:88.75px;top:12.01px;font-size:14.4px;line-height:17px;color:#d6d6d6;white-space:nowrap;">Escribe aquí para buscar</div>
<div class="a" style="left:1508.75px;top:13.63px;font-size:13.4px;line-height:15px;color:#fff;white-space:nowrap;transform:scaleX(0.960);transform-origin:0 0;">20°C</div>
<div class="a" style="left:1547.50px;top:13.63px;font-size:13.4px;line-height:15px;color:#fff;white-space:nowrap;">Parc. nublado</div>
<div class="a" style="left:1769.50px;top:12.59px;font-size:12px;line-height:14px;color:#fff;white-space:nowrap;transform:scaleX(0.750);transform-origin:0 0;">ESP</div>
<div class="a" style="left:1807.50px;top:4.44px;font-size:11.6px;line-height:13px;color:#fff;white-space:nowrap;">07:08 pm</div>
<div class="a" style="left:1802.50px;top:20.94px;font-size:11.6px;line-height:13px;color:#fff;white-space:nowrap;">21/04/2022</div></div>
</body></html>
